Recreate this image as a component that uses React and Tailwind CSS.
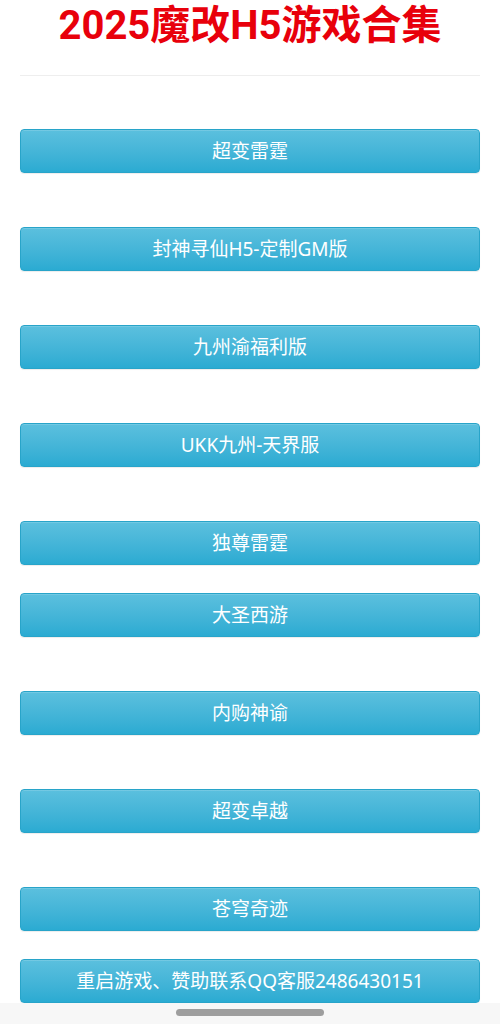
const games = [
  { name: '超变雷霆', gap: 'mt-[53px]' },
  { name: '封神寻仙H5-定制GM版', gap: 'mt-[54px]' },
  { name: '九州渝福利版', gap: 'mt-[54px]' },
  { name: 'UKK九州-天界服', gap: 'mt-[54px]' },
  { name: '独尊雷霆', gap: 'mt-[54px]' },
  { name: '大圣西游', gap: 'mt-[28px]' },
  { name: '内购神谕', gap: 'mt-[54px]' },
  { name: '超变卓越', gap: 'mt-[54px]' },
  { name: '苍穹奇迹', gap: 'mt-[54px]' },
  { name: '重启游戏、赞助联系QQ客服2486430151', gap: 'mt-[28px]' },
];

export default function App() {
  return (
    <div className="min-h-screen bg-white font-['Noto_Sans','Noto_Sans_CJK_SC',sans-serif]">
      <div className="px-5 pb-10">
        <h1 className="text-center font-['Roboto','Noto_Sans_CJK_SC',sans-serif] text-[40px] font-bold leading-[52px] text-[#e8000b]">
          2025魔改H5游戏合集
        </h1>
        <hr className="mt-[23px] border-t border-[#eeeeee]" />

        <div className="flex flex-col">
          {games.map((g) => (
            <button
              key={g.name}
              className={`${g.gap} flex h-[44px] w-full items-center justify-center rounded-[4px] border border-[#28a4c9] bg-gradient-to-b from-[#5bc0de] to-[#2aabd2] text-[19px] text-white shadow-[inset_0_1px_0_rgba(255,255,255,0.15),0_1px_1px_rgba(0,0,0,0.075)]`}
            >
              {g.name}
            </button>
          ))}
        </div>
      </div>

      {/* system nav bar */}
      <div className="fixed inset-x-0 bottom-0 flex h-[21px] items-start justify-center bg-[#f7f7f7]">
        <div className="mt-[6px] h-[7px] w-[148px] rounded-full bg-[#9e9e9e]" />
      </div>
    </div>
  );
}
